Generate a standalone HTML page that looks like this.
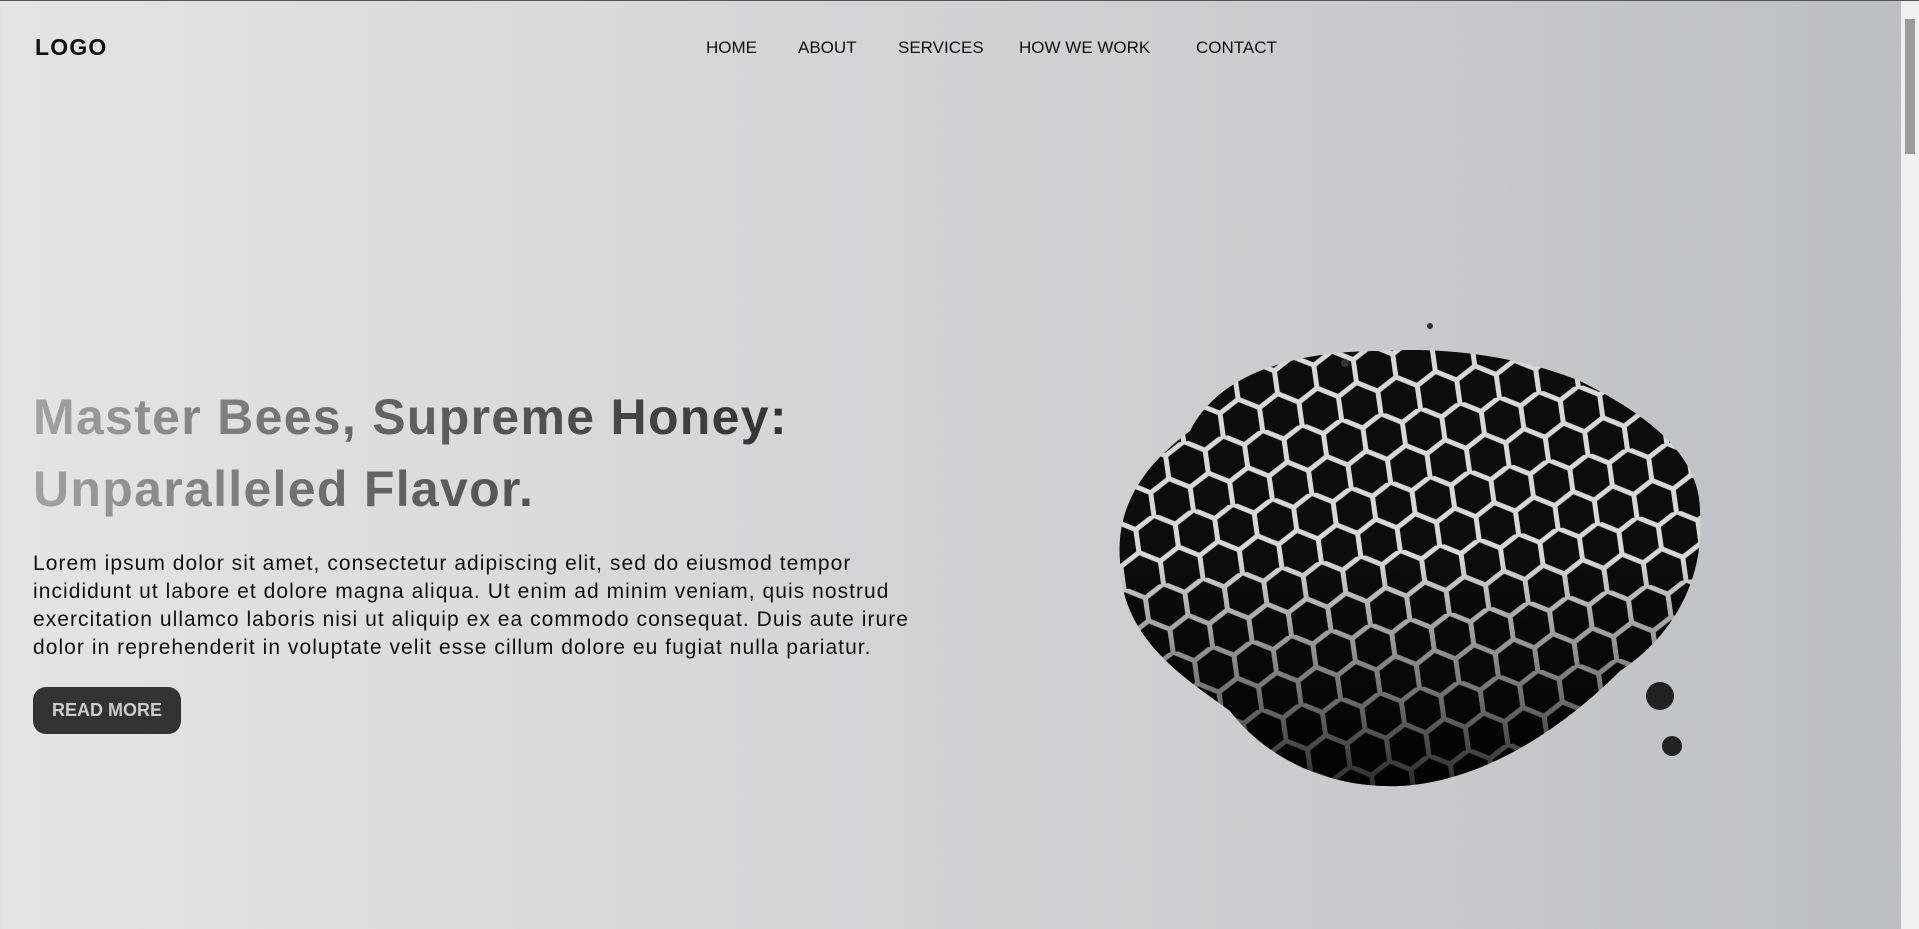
<!DOCTYPE html>
<html><head><meta charset="utf-8"><style>
html,body{margin:0;padding:0}
body{width:1919px;height:928px;overflow:hidden;position:relative;font-family:"Liberation Sans",Arial,sans-serif;
background:linear-gradient(90deg,#e4e4e4 0%,#d6d6d7 40%,#c9c9cb 75%,#bdbec1 100%);border-top:1px solid #555;box-sizing:border-box}
.logo{position:absolute;left:35px;top:33px;font-weight:bold;font-size:23px;letter-spacing:1.2px;color:#111}
.nav{position:absolute;top:37px;left:706px;font-size:17px;color:#111}
.nav span{position:absolute;white-space:nowrap}
h1{position:absolute;left:33px;top:380px;margin:0;font-size:50px;line-height:72px;font-weight:bold;letter-spacing:1.3px;
background:linear-gradient(90deg,#a2a2a2 0%,#666 40%,#2a2a2a 100%);-webkit-background-clip:text;background-clip:text;color:transparent;width:820px}
p{position:absolute;left:33px;top:549px;margin:0;font-size:21px;letter-spacing:1.05px;line-height:28px;color:#111;white-space:nowrap}
.btn{position:absolute;left:33px;top:686px;width:148px;height:47px;border-radius:13px;background:#333;color:#ccc;font-weight:bold;font-size:18px;line-height:47px;text-align:center}
.sb{position:absolute;right:0;top:0;width:18px;height:928px;background:#f0f0f0}
.sb .th{position:absolute;left:4px;top:18px;width:10px;height:135px;background:#9a9a9a}
</style></head><body>
<div class="logo">LOGO</div>
<div class="nav">
<span style="left:0">HOME</span>
<span style="left:92px">ABOUT</span>
<span style="left:192px">SERVICES</span>
<span style="left:313px">HOW WE WORK</span>
<span style="left:490px">CONTACT</span>
</div>
<h1>Master Bees, Supreme Honey:<br>Unparalleled Flavor.</h1>
<p>Lorem ipsum dolor sit amet, consectetur adipiscing elit, sed do eiusmod tempor<br>incididunt ut labore et dolore magna aliqua. Ut enim ad minim veniam, quis nostrud<br>exercitation ullamco laboris nisi ut aliquip ex ea commodo consequat. Duis aute irure<br>dolor in reprehenderit in voluptate velit esse cillum dolore eu fugiat nulla pariatur.</p>
<div class="btn">READ MORE</div>
<svg style="position:absolute;left:1100px;top:310px" width="620" height="490" viewBox="0 0 620 490">
<defs>
<pattern id="hx" width="39.84" height="69" patternUnits="userSpaceOnUse" patternTransform="rotate(-8) translate(5 3)">
<rect width="39.84" height="69" fill="#0c0c0c"/>
<path d="M19.92 0L39.84 11.5L39.84 34.5L19.92 46L0 34.5L0 11.5Z M19.92 46L19.92 69" fill="none" stroke="#d8d8d8" stroke-width="5"/>
</pattern>
<linearGradient id="sh" x1="0" y1="0" x2="0" y2="1">
<stop offset="0.5" stop-color="#000" stop-opacity="0"/>
<stop offset="1" stop-color="#000" stop-opacity="0.85"/>
</linearGradient>
<clipPath id="cp"><path d="M90 120 C120 60 200 40 280 40 C360 35 430 50 480 70 C540 100 600 140 600 200 C605 260 580 320 520 360 C470 410 390 470 300 475 C220 478 160 440 130 400 C90 370 20 330 20 250 C15 190 50 150 90 120Z"/></clipPath>
</defs>
<g clip-path="url(#cp)">
<rect width="620" height="490" fill="url(#hx)"/>
<rect width="620" height="490" fill="url(#sh)"/>
</g>
<circle cx="560" cy="385" r="14" fill="#222"/>
<circle cx="572" cy="435" r="10" fill="#222"/>
<circle cx="330" cy="15" r="3" fill="#333"/>
<circle cx="245" cy="52" r="4" fill="#333"/>
</svg>
<div class="sb"><div class="th"></div></div>
</body></html>
